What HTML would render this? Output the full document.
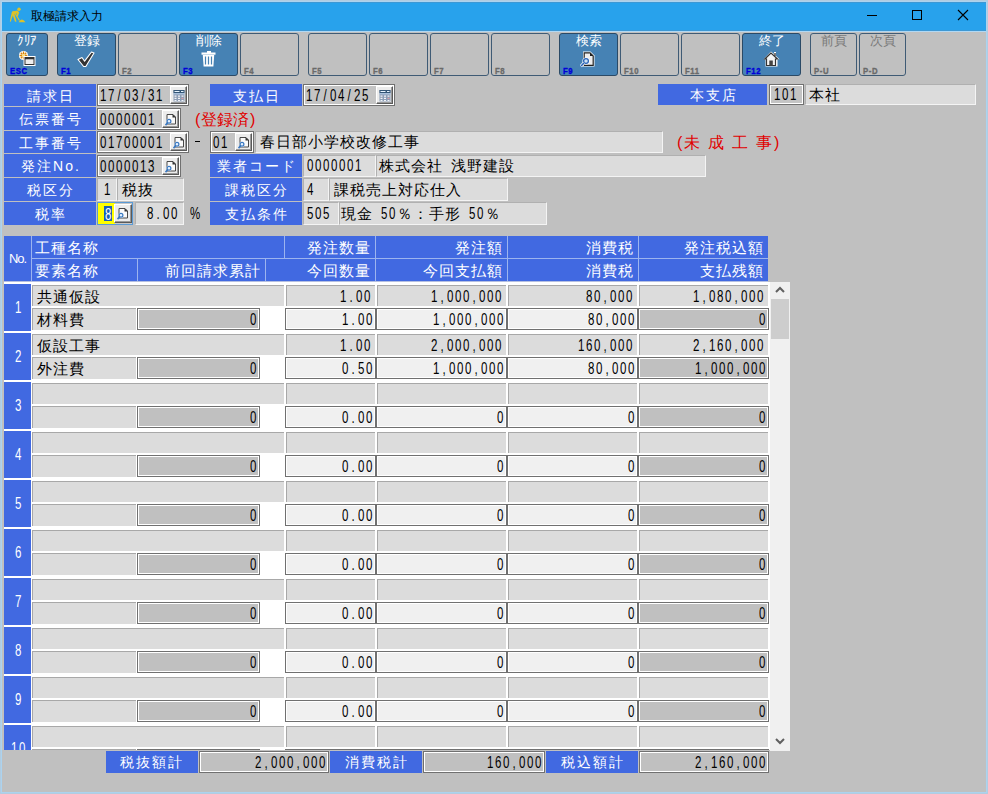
<!DOCTYPE html><html><head><meta charset="utf-8"><style>
*{margin:0;padding:0;box-sizing:border-box}
html,body{width:988px;height:794px;overflow:hidden;background:#b2cce0;font-family:"Liberation Sans",sans-serif}
div{position:absolute;white-space:nowrap}
.win{background:#c0c0c0}
.title{background:#28a2ec}
.btn{border:1px solid #2b4a66;border-radius:3px;background:#4682b4}
.btn.off{background:#c0c0c0;border-color:#3f5b75}
.bl{color:#fff;font-size:13px;text-align:center;line-height:14px;letter-spacing:-0.5px}
.key{font-family:"Liberation Sans",sans-serif;font-weight:bold;font-size:9px;color:#0000d8;line-height:8px;letter-spacing:0.7px;transform:scaleX(.86);transform-origin:0 0;-webkit-text-stroke:0.35px}
.off .key{color:#6a6a6a;-webkit-text-stroke-color:#6a6a6a}
.off .bl{color:#7a7a7a}
.n{font-family:"Liberation Sans",sans-serif;font-size:16px;letter-spacing:0}
.n i{display:inline-block;width:8px;text-align:center;font-style:normal;transform:scaleX(.72)}
.n b{display:inline-block;width:16px;font-weight:normal;font-size:15px;text-align:center}
.lab{background:#4169e1;color:#fff;font-size:14px;text-align:center;letter-spacing:2px;text-indent:2px}
.fld{background:#c4c4c4;border:1px solid #707070;box-shadow:inset 0 0 0 1px #fff;padding-left:3px;color:#000}
.ro{background:#dcdcdc;border:1px solid;border-color:#b0b0b0 #f4f4f4 #f4f4f4 #b0b0b0;font-size:15px;letter-spacing:1px;padding-left:4px;color:#000}
.ib{background:#ececec;border:1px solid;border-color:#fff #5a5a5a #5a5a5a #fff;box-shadow:inset -1px -1px 0 #9a9a9a}
.red{color:#e00000;font-size:15px}
.uc{background:#dcdcdc;border-top:1px solid #a8a8a8;border-left:1px solid #a8a8a8;font-size:15px;letter-spacing:1px;color:#000}
.in{background:#f0f0f0;border:1px solid #707070;box-shadow:inset 1px 1px 0 #fff,inset -1px -1px 0 #fff;color:#000}
.dk{background:#c0c0c0;border:1px solid #707070;box-shadow:inset 1px 1px 0 #fff,inset -1px -1px 0 #fff;color:#000}
.th{background:#4169e1;color:#fff;font-size:15px;letter-spacing:1px}
</style></head><body>
<div class="" style="left:1px;top:1px;width:986px;height:792px;background:#acd3ef"></div>
<div class="win" style="left:2px;top:31px;width:984px;height:761px;"></div>
<div class="title" style="left:2px;top:2px;width:984px;height:28px;"></div>
<div class="" style="left:2px;top:2px;width:984px;height:1px;background:#3d98d4"></div>
<div class="" style="left:2px;top:30px;width:984px;height:1px;background:#3d98d4"></div>
<div class="" style="left:2px;top:31px;width:984px;height:1px;background:#b0d8f4"></div>
<div class="" style="left:31px;top:8px;width:169px;height:17px;font-size:12px;line-height:17px;color:#000">取極請求入力</div>
<svg style="position:absolute;left:0;top:0" width="30" height="30" viewBox="0 0 30 30"><g fill="#dcc22a"><circle cx="19" cy="9.2" r="1.7"/><path d="M12 11.5 L17.5 10.5 L19.2 12.5 L17.8 16.5 L16.2 16 L17 13.5 L14.5 14 L16.5 21.5 L15 21.8 L12.8 15.5 L10.8 21.8 L9.8 21.5 L11.5 13.5 Z"/><path d="M13.5 11 L19.5 20.5" stroke="#dcc22a" stroke-width="1.2"/><path d="M18.5 22.2 Q21.8 16.8 25.5 22.2 Z"/></g></svg>
<div class="" style="left:867px;top:15px;width:10px;height:1px;background:#000"></div>
<div class="" style="left:912px;top:10px;width:10px;height:10px;border:1px solid #000"></div>
<svg style="position:absolute;left:957px;top:9px" width="12" height="12" viewBox="0 0 12 12"><path d="M1 1 L11 11 M11 1 L1 11" stroke="#000" stroke-width="1.1"/></svg>
<div class="btn" style="left:6px;top:33px;width:42px;height:43px;"><div class="bl" style="left:0;top:0px;width:100%">ｸﾘｱ</div><div style="left:12px;top:16px;line-height:0"><svg width="17" height="17" viewBox="0 0 17 17"><circle cx="4.5" cy="5.5" r="4.6" fill="#fff"/><g stroke="#d88408" stroke-width="1.3" stroke-linecap="butt"><path d="M4.5 1.6V4.2M4.5 6.8V9.4M0.6 5.5H3.2M5.8 5.5H8.4M1.8 2.8L3.4 4.4M5.6 6.6L7.2 8.2M7.2 2.8L5.6 4.4M3.4 6.6L1.8 8.2"/></g><circle cx="4.5" cy="5.5" r="1.3" fill="#fce070"/><rect x="4.5" y="6" width="12" height="10" fill="#fff"/><rect x="5.5" y="7" width="10" height="8" fill="#333"/><rect x="6.5" y="9.3" width="8" height="4.7" fill="#eee"/></svg></div><div class="key" style="left:3px;top:33px">ESC</div></div>
<div class="btn" style="left:57px;top:33px;width:59px;height:43px;"><div class="bl" style="left:0;top:0px;width:100%">登録</div><div style="left:19px;top:17px;line-height:0"><svg width="18" height="17" viewBox="0 0 18 17"><path d="M1 8.5 L5 6.5 L7.6 10.2 L14.5 1 L17 2 L8.8 15.5 L6.6 15.5 Z" fill="#333" stroke="#fff" stroke-width="1.1" stroke-linejoin="round"/></svg></div><div class="key" style="left:3px;top:33px">F1</div></div>
<div class="btn off" style="left:118px;top:33px;width:59px;height:43px;"><div class="key" style="left:3px;top:33px">F2</div></div>
<div class="btn" style="left:179px;top:33px;width:59px;height:43px;"><div class="bl" style="left:0;top:0px;width:100%">削除</div><div style="left:21px;top:17px;line-height:0"><svg width="16" height="17" viewBox="0 0 16 17"><rect x="6" y="0" width="4" height="2" fill="#fff"/><rect x="0.5" y="1.5" width="14" height="2.2" fill="#fff"/><path d="M1.8 4 H13.2 L12.4 15.5 H2.6 Z" fill="#fff"/><path d="M4.5 5.5 V13.5 M7.5 5.5 V13.5 M10.5 5.5 V13.5" stroke="#4682b4" stroke-width="1.2"/></svg></div><div class="key" style="left:3px;top:33px">F3</div></div>
<div class="btn off" style="left:240px;top:33px;width:59px;height:43px;"><div class="key" style="left:3px;top:33px">F4</div></div>
<div class="btn off" style="left:308px;top:33px;width:59px;height:43px;"><div class="key" style="left:3px;top:33px">F5</div></div>
<div class="btn off" style="left:369px;top:33px;width:59px;height:43px;"><div class="key" style="left:3px;top:33px">F6</div></div>
<div class="btn off" style="left:430px;top:33px;width:59px;height:43px;"><div class="key" style="left:3px;top:33px">F7</div></div>
<div class="btn off" style="left:491px;top:33px;width:59px;height:43px;"><div class="key" style="left:3px;top:33px">F8</div></div>
<div class="btn" style="left:559px;top:33px;width:59px;height:43px;"><div class="bl" style="left:0;top:0px;width:100%">検索</div><div style="left:20px;top:17px;line-height:0"><svg width="16" height="17" viewBox="0 0 16 17"><path d="M3 0.5 H10.5 L14.5 4.5 V15.5 H3 Z" fill="#fff"/><path d="M4.2 1.8 H10 L13.2 5 V14.3 H4.2 Z" fill="#eee" stroke="#222" stroke-width="1.2"/><path d="M10 1.8 V5 H13.2" fill="#222"/><circle cx="6" cy="10" r="3.6" fill="#fff"/><circle cx="6" cy="10" r="2.4" fill="#cfe3f5" stroke="#2a64b8" stroke-width="1.3"/><path d="M4.2 11.8 L0.8 15.2" stroke="#fff" stroke-width="3"/><path d="M4.2 11.8 L1 15" stroke="#2a64b8" stroke-width="1.6"/></svg></div><div class="key" style="left:3px;top:33px">F9</div></div>
<div class="btn off" style="left:620px;top:33px;width:59px;height:43px;"><div class="key" style="left:3px;top:33px">F10</div></div>
<div class="btn off" style="left:681px;top:33px;width:59px;height:43px;"><div class="key" style="left:3px;top:33px">F11</div></div>
<div class="btn" style="left:742px;top:33px;width:59px;height:43px;"><div class="bl" style="left:0;top:0px;width:100%">終了</div><div style="left:20px;top:17px;line-height:0"><svg width="17" height="16" viewBox="0 0 17 16"><path d="M8 0.5 L11 3 V1 H13 V5 L16.5 8.3 L14.5 8.6 V15.5 H2.5 V8.6 L0.5 8.3 Z" fill="#fff"/><path d="M8 2 L1.8 8 H3.5 V14.5 H12.5 V8 H14.5 Z" fill="#f4f4f4" stroke="#333" stroke-width="1.2" stroke-linejoin="miter"/><path d="M12 2 V5" stroke="#333" stroke-width="1.3"/><rect x="6.3" y="9.5" width="3.5" height="5" fill="#444"/></svg></div><div class="key" style="left:3px;top:33px">F12</div></div>
<div class="btn off" style="left:810px;top:33px;width:47px;height:43px;"><div class="bl" style="left:0;top:0px;width:100%">前頁</div><div class="key" style="left:3px;top:33px">P-U</div></div>
<div class="btn off" style="left:859px;top:33px;width:47px;height:43px;"><div class="bl" style="left:0;top:0px;width:100%">次頁</div><div class="key" style="left:3px;top:33px">P-D</div></div>
<div class="lab" style="left:4px;top:84px;width:92px;height:22px;line-height:24px;">請求日</div>
<div class="lab" style="left:4px;top:107px;width:92px;height:23px;line-height:25px;">伝票番号</div>
<div class="lab" style="left:4px;top:131px;width:92px;height:22px;line-height:24px;">工事番号</div>
<div class="lab" style="left:4px;top:154px;width:92px;height:23px;line-height:25px;">発注No.</div>
<div class="lab" style="left:4px;top:178px;width:92px;height:23px;line-height:25px;">税区分</div>
<div class="lab" style="left:4px;top:202px;width:92px;height:23px;line-height:25px;">税率</div>
<div class="fld" style="left:97px;top:84px;width:92px;height:22px;"><div style="left:1px;top:1px;line-height:20px"><span class="n"><i>1</i><i>7</i><i>/</i><i>0</i><i>3</i><i>/</i><i>3</i><i>1</i></span></div><div class="ib" style="right:1px;top:1px;width:17px;height:18px"><svg style="position:absolute;left:2px;top:2px" width="12" height="13" viewBox="0 0 12 13"><rect x="0.5" y="1" width="11" height="11.5" fill="#8c9db5"/><rect x="0.5" y="1" width="11" height="3" fill="#345676"/><rect x="1.5" y="2" width="5" height="1" fill="#e8f4ff"/><rect x="8" y="2" width="2.5" height="1" fill="#e8f4ff"/><rect x="0.5" y="4" width="11" height="1.5" fill="#a8c0dc"/><path d="M1.5 6.5h2v1.3h-2zM5 6.5h2v1.3H5zM8.5 6.5h2v1.3h-2zM1.5 8.8h2v1.3h-2zM5 8.8h2v1.3H5zM1.5 11h2v1h-2zM5 11h2v1H5zM8.5 11h2v1h-2z" fill="#f2f4f8"/><path d="M8.5 8.8h2v1.3h-2z" fill="#d8a0a8"/></svg></div></div>
<div class="lab" style="left:210px;top:84px;width:92px;height:22px;line-height:24px;">支払日</div>
<div class="fld" style="left:303px;top:84px;width:92px;height:22px;"><div style="left:1px;top:1px;line-height:20px"><span class="n"><i>1</i><i>7</i><i>/</i><i>0</i><i>4</i><i>/</i><i>2</i><i>5</i></span></div><div class="ib" style="right:1px;top:1px;width:17px;height:18px"><svg style="position:absolute;left:2px;top:2px" width="12" height="13" viewBox="0 0 12 13"><rect x="0.5" y="1" width="11" height="11.5" fill="#8c9db5"/><rect x="0.5" y="1" width="11" height="3" fill="#345676"/><rect x="1.5" y="2" width="5" height="1" fill="#e8f4ff"/><rect x="8" y="2" width="2.5" height="1" fill="#e8f4ff"/><rect x="0.5" y="4" width="11" height="1.5" fill="#a8c0dc"/><path d="M1.5 6.5h2v1.3h-2zM5 6.5h2v1.3H5zM8.5 6.5h2v1.3h-2zM1.5 8.8h2v1.3h-2zM5 8.8h2v1.3H5zM1.5 11h2v1h-2zM5 11h2v1H5zM8.5 11h2v1h-2z" fill="#f2f4f8"/><path d="M8.5 8.8h2v1.3h-2z" fill="#d8a0a8"/></svg></div></div>
<div class="lab" style="left:658px;top:84px;width:109px;height:21px;line-height:22px;font-size:14px;letter-spacing:2px">本支店</div>
<div class="fld" style="left:769px;top:84px;width:35px;height:21px;padding-left:3px;line-height:19px"><span class="n"><i>1</i><i>0</i><i>1</i></span></div>
<div class="ro" style="left:805px;top:84px;width:171px;height:21px;line-height:20px;padding-left:3px">本社</div>
<div class="fld" style="left:97px;top:108px;width:84px;height:22px;"><div style="left:1px;top:1px;line-height:20px"><span class="n"><i>0</i><i>0</i><i>0</i><i>0</i><i>0</i><i>0</i><i>1</i></span></div><div class="ib" style="right:1px;top:1px;width:17px;height:18px"><svg style="position:absolute;left:2px;top:2px" width="13" height="14" viewBox="0 0 13 14"><path d="M2 1.5 H8 L10.5 4 V11 H2 Z" fill="#fafafa" stroke="#484848" stroke-width="1"/><path d="M7.5 1 L11 4.5 H7.5 Z" fill="#333"/><circle cx="4" cy="8.2" r="2.6" fill="#fff"/><circle cx="4" cy="8.2" r="1.9" fill="#e6f2ff" stroke="#3a78c0" stroke-width="1.2"/><path d="M2.6 9.8 L0.5 12.2" stroke="#3a78c0" stroke-width="1.7"/></svg></div></div>
<div class="red" style="left:195px;top:108px;width:17px;height:22px;line-height:23px;font-size:16px">(</div>
<div class="red" style="left:201px;top:108px;width:17px;height:22px;line-height:23px;font-size:16px">登</div>
<div class="red" style="left:217px;top:108px;width:17px;height:22px;line-height:23px;font-size:16px">録</div>
<div class="red" style="left:233px;top:108px;width:17px;height:22px;line-height:23px;font-size:16px">済</div>
<div class="red" style="left:250px;top:108px;width:17px;height:22px;line-height:23px;font-size:16px">)</div>
<div class="fld" style="left:97px;top:131px;width:92px;height:22px;"><div style="left:1px;top:1px;line-height:20px"><span class="n"><i>0</i><i>1</i><i>7</i><i>0</i><i>0</i><i>0</i><i>0</i><i>1</i></span></div><div class="ib" style="right:1px;top:1px;width:17px;height:18px"><svg style="position:absolute;left:2px;top:2px" width="13" height="14" viewBox="0 0 13 14"><path d="M2 1.5 H8 L10.5 4 V11 H2 Z" fill="#fafafa" stroke="#484848" stroke-width="1"/><path d="M7.5 1 L11 4.5 H7.5 Z" fill="#333"/><circle cx="4" cy="8.2" r="2.6" fill="#fff"/><circle cx="4" cy="8.2" r="1.9" fill="#e6f2ff" stroke="#3a78c0" stroke-width="1.2"/><path d="M2.6 9.8 L0.5 12.2" stroke="#3a78c0" stroke-width="1.7"/></svg></div></div>
<div class="" style="left:195px;top:141px;width:5px;height:1px;background:#000"></div>
<div class="fld" style="left:210px;top:131px;width:44px;height:22px;"><div style="left:1px;top:1px;line-height:20px"><span class="n"><i>0</i><i>1</i></span></div><div class="ib" style="right:1px;top:1px;width:17px;height:18px"><svg style="position:absolute;left:2px;top:2px" width="13" height="14" viewBox="0 0 13 14"><path d="M2 1.5 H8 L10.5 4 V11 H2 Z" fill="#fafafa" stroke="#484848" stroke-width="1"/><path d="M7.5 1 L11 4.5 H7.5 Z" fill="#333"/><circle cx="4" cy="8.2" r="2.6" fill="#fff"/><circle cx="4" cy="8.2" r="1.9" fill="#e6f2ff" stroke="#3a78c0" stroke-width="1.2"/><path d="M2.6 9.8 L0.5 12.2" stroke="#3a78c0" stroke-width="1.7"/></svg></div></div>
<div class="ro" style="left:255px;top:131px;width:408px;height:22px;line-height:20px;">春日部小学校改修工事</div>
<div class="red" style="left:677px;top:131px;width:17px;height:22px;line-height:23px;font-size:16px">(</div>
<div class="red" style="left:684px;top:131px;width:17px;height:22px;line-height:23px;font-size:16px">未</div>
<div class="red" style="left:708px;top:131px;width:17px;height:22px;line-height:23px;font-size:16px">成</div>
<div class="red" style="left:732px;top:131px;width:17px;height:22px;line-height:23px;font-size:16px">工</div>
<div class="red" style="left:756px;top:131px;width:17px;height:22px;line-height:23px;font-size:16px">事</div>
<div class="red" style="left:774px;top:131px;width:17px;height:22px;line-height:23px;font-size:16px">)</div>
<div class="fld" style="left:97px;top:155px;width:84px;height:22px;"><div style="left:1px;top:1px;line-height:20px"><span class="n"><i>0</i><i>0</i><i>0</i><i>0</i><i>0</i><i>1</i><i>3</i></span></div><div class="ib" style="right:1px;top:1px;width:17px;height:18px"><svg style="position:absolute;left:2px;top:2px" width="13" height="14" viewBox="0 0 13 14"><path d="M2 1.5 H8 L10.5 4 V11 H2 Z" fill="#fafafa" stroke="#484848" stroke-width="1"/><path d="M7.5 1 L11 4.5 H7.5 Z" fill="#333"/><circle cx="4" cy="8.2" r="2.6" fill="#fff"/><circle cx="4" cy="8.2" r="1.9" fill="#e6f2ff" stroke="#3a78c0" stroke-width="1.2"/><path d="M2.6 9.8 L0.5 12.2" stroke="#3a78c0" stroke-width="1.7"/></svg></div></div>
<div class="lab" style="left:210px;top:154px;width:92px;height:23px;line-height:25px;">業者コード</div>
<div class="ro" style="left:303px;top:155px;width:73px;height:22px;line-height:20px;padding-left:2px"><span class="n"><i>0</i><i>0</i><i>0</i><i>0</i><i>0</i><i>0</i><i>1</i></span></div>
<div class="ro" style="left:376px;top:155px;width:330px;height:22px;line-height:20px;padding-left:1px"><span class="n"><b>株</b><b>式</b><b>会</b><b>社</b><i>&nbsp;</i><b>浅</b><b>野</b><b>建</b><b>設</b></span></div>
<div class="ro" style="left:97px;top:178px;width:20px;height:23px;line-height:21px;padding-left:5px"><span class="n"><i>1</i></span></div>
<div class="ro" style="left:117px;top:178px;width:67px;height:23px;line-height:21px;">税抜</div>
<div class="lab" style="left:210px;top:178px;width:92px;height:23px;line-height:25px;">課税区分</div>
<div class="ro" style="left:303px;top:178px;width:26px;height:23px;line-height:21px;padding-left:2px"><span class="n"><i>4</i></span></div>
<div class="ro" style="left:329px;top:178px;width:179px;height:23px;line-height:21px;">課税売上対応仕入</div>
<div class="" style="left:97px;top:202px;width:36px;height:23px;background:#c8c8c8;border:1px solid #5a9ad6"><div style="left:0;top:0;width:17px;height:21px;background:#ffff00"></div><div style="left:6px;top:3px;width:8px;height:15px;background:#1a5fb4;color:#fff;line-height:17px"><span class="n"><i>8</i></span></div><div class="ib" style="left:16px;top:1px;width:18px;height:19px"><svg style="position:absolute;left:2px;top:2px" width="13" height="14" viewBox="0 0 13 14"><path d="M2 1.5 H8 L10.5 4 V11 H2 Z" fill="#fafafa" stroke="#484848" stroke-width="1"/><path d="M7.5 1 L11 4.5 H7.5 Z" fill="#333"/><circle cx="4" cy="8.2" r="2.6" fill="#fff"/><circle cx="4" cy="8.2" r="1.9" fill="#e6f2ff" stroke="#3a78c0" stroke-width="1.2"/><path d="M2.6 9.8 L0.5 12.2" stroke="#3a78c0" stroke-width="1.7"/></svg></div></div>
<div class="ro" style="left:135px;top:202px;width:49px;height:23px;line-height:21px;text-align:right;padding-right:3px;padding-right:5px"><span class="n"><i>8</i><i>.</i><i>0</i><i>0</i></span></div>
<div class="" style="left:189px;top:202px;width:11px;height:23px;line-height:23px;color:#000"><span class="n"><i>%</i></span></div>
<div class="lab" style="left:210px;top:202px;width:92px;height:23px;line-height:25px;">支払条件</div>
<div class="ro" style="left:303px;top:202px;width:36px;height:23px;line-height:21px;padding-left:2px"><span class="n"><i>5</i><i>0</i><i>5</i></span></div>
<div class="ro" style="left:339px;top:202px;width:208px;height:23px;line-height:21px;padding-left:0px"><span class="n"><b>現</b><b>金</b><i>&nbsp;</i><i>5</i><i>0</i><b>％</b><b>：</b><b>手</b><b>形</b><i>&nbsp;</i><i>5</i><i>0</i><b>％</b></span></div>
<div class="th" style="left:4px;top:236px;width:764px;height:45px;"></div>
<div class="th" style="left:4px;top:236px;width:27px;height:45px;text-align:center;line-height:45px;font-size:13px;letter-spacing:-1px">No.</div>
<div class="" style="left:4px;top:281px;width:764px;height:1px;background:#b4bfe2"></div>
<div class="" style="left:31px;top:236px;width:1px;height:45px;background:#9cb4ef"></div>
<div class="th" style="left:32px;top:236px;width:252px;height:22px;padding-left:3px;line-height:24px">工種名称</div>
<div class="th" style="left:285px;top:236px;width:90px;height:22px;padding-right:4px;text-align:right;line-height:24px">発注数量</div>
<div class="th" style="left:376px;top:236px;width:131px;height:22px;padding-right:4px;text-align:right;line-height:24px">発注額</div>
<div class="th" style="left:508px;top:236px;width:130px;height:22px;padding-right:4px;text-align:right;line-height:24px">消費税</div>
<div class="th" style="left:639px;top:236px;width:129px;height:22px;padding-right:4px;text-align:right;line-height:24px">発注税込額</div>
<div class="" style="left:32px;top:258px;width:736px;height:1px;background:#9cb4ef"></div>
<div class="th" style="left:32px;top:259px;width:105px;height:22px;padding-left:3px;line-height:24px">要素名称</div>
<div class="th" style="left:138px;top:259px;width:127px;height:22px;padding-right:4px;text-align:right;line-height:24px">前回請求累計</div>
<div class="th" style="left:266px;top:259px;width:109px;height:22px;padding-right:4px;text-align:right;line-height:24px">今回数量</div>
<div class="th" style="left:376px;top:259px;width:131px;height:22px;padding-right:4px;text-align:right;line-height:24px">今回支払額</div>
<div class="th" style="left:508px;top:259px;width:130px;height:22px;padding-right:4px;text-align:right;line-height:24px">消費税</div>
<div class="th" style="left:639px;top:259px;width:129px;height:22px;padding-right:4px;text-align:right;line-height:24px">支払残額</div>
<div class="" style="left:284px;top:236px;width:1px;height:22px;background:#9cb4ef"></div>
<div class="" style="left:375px;top:236px;width:1px;height:22px;background:#9cb4ef"></div>
<div class="" style="left:507px;top:236px;width:1px;height:22px;background:#9cb4ef"></div>
<div class="" style="left:638px;top:236px;width:1px;height:22px;background:#9cb4ef"></div>
<div class="" style="left:137px;top:259px;width:1px;height:22px;background:#9cb4ef"></div>
<div class="" style="left:265px;top:259px;width:1px;height:22px;background:#9cb4ef"></div>
<div class="" style="left:375px;top:259px;width:1px;height:22px;background:#9cb4ef"></div>
<div class="" style="left:507px;top:259px;width:1px;height:22px;background:#9cb4ef"></div>
<div class="" style="left:638px;top:259px;width:1px;height:22px;background:#9cb4ef"></div>
<div style="left:4px;top:282px;width:766px;height:468px;background:#fff;overflow:hidden">
<div class="th" style="left:0px;top:2px;width:27px;height:47px;text-align:center;line-height:48px;letter-spacing:0"><span class="n"><i>1</i></span></div>
<div class="uc" style="left:28px;top:3px;width:252px;height:21px;padding-left:4px;line-height:21px;">共通仮設</div>
<div class="uc" style="left:282px;top:3px;width:89px;height:21px;text-align:right;padding-right:4px;line-height:21px;"><span class="n"><i>1</i><i>.</i><i>0</i><i>0</i></span></div>
<div class="uc" style="left:373px;top:3px;width:129px;height:21px;text-align:right;padding-right:4px;line-height:21px;"><span class="n"><i>1</i><i>,</i><i>0</i><i>0</i><i>0</i><i>,</i><i>0</i><i>0</i><i>0</i></span></div>
<div class="uc" style="left:504px;top:3px;width:129px;height:21px;text-align:right;padding-right:4px;line-height:21px;"><span class="n"><i>8</i><i>0</i><i>,</i><i>0</i><i>0</i><i>0</i></span></div>
<div class="uc" style="left:635px;top:3px;width:129px;height:21px;text-align:right;padding-right:4px;line-height:21px;"><span class="n"><i>1</i><i>,</i><i>0</i><i>8</i><i>0</i><i>,</i><i>0</i><i>0</i><i>0</i></span></div>
<div class="uc" style="left:28px;top:26px;width:104px;height:22px;padding-left:4px;line-height:22px;">材料費</div>
<div class="dk" style="left:133px;top:26px;width:123px;height:22px;text-align:right;padding-right:2px;line-height:22px;"><span class="n"><i>0</i></span></div>
<div class="in" style="left:281px;top:26px;width:91px;height:22px;text-align:right;padding-right:2px;line-height:22px;"><span class="n"><i>1</i><i>.</i><i>0</i><i>0</i></span></div>
<div class="in" style="left:372px;top:26px;width:131px;height:22px;text-align:right;padding-right:2px;line-height:22px;"><span class="n"><i>1</i><i>,</i><i>0</i><i>0</i><i>0</i><i>,</i><i>0</i><i>0</i><i>0</i></span></div>
<div class="in" style="left:503px;top:26px;width:131px;height:22px;text-align:right;padding-right:2px;line-height:22px;"><span class="n"><i>8</i><i>0</i><i>,</i><i>0</i><i>0</i><i>0</i></span></div>
<div class="dk" style="left:634px;top:26px;width:131px;height:22px;text-align:right;padding-right:2px;line-height:22px;"><span class="n"><i>0</i></span></div>
<div class="th" style="left:0px;top:51px;width:27px;height:47px;text-align:center;line-height:48px;letter-spacing:0"><span class="n"><i>2</i></span></div>
<div class="uc" style="left:28px;top:52px;width:252px;height:21px;padding-left:4px;line-height:21px;">仮設工事</div>
<div class="uc" style="left:282px;top:52px;width:89px;height:21px;text-align:right;padding-right:4px;line-height:21px;"><span class="n"><i>1</i><i>.</i><i>0</i><i>0</i></span></div>
<div class="uc" style="left:373px;top:52px;width:129px;height:21px;text-align:right;padding-right:4px;line-height:21px;"><span class="n"><i>2</i><i>,</i><i>0</i><i>0</i><i>0</i><i>,</i><i>0</i><i>0</i><i>0</i></span></div>
<div class="uc" style="left:504px;top:52px;width:129px;height:21px;text-align:right;padding-right:4px;line-height:21px;"><span class="n"><i>1</i><i>6</i><i>0</i><i>,</i><i>0</i><i>0</i><i>0</i></span></div>
<div class="uc" style="left:635px;top:52px;width:129px;height:21px;text-align:right;padding-right:4px;line-height:21px;"><span class="n"><i>2</i><i>,</i><i>1</i><i>6</i><i>0</i><i>,</i><i>0</i><i>0</i><i>0</i></span></div>
<div class="uc" style="left:28px;top:75px;width:104px;height:22px;padding-left:4px;line-height:22px;">外注費</div>
<div class="dk" style="left:133px;top:75px;width:123px;height:22px;text-align:right;padding-right:2px;line-height:22px;"><span class="n"><i>0</i></span></div>
<div class="in" style="left:281px;top:75px;width:91px;height:22px;text-align:right;padding-right:2px;line-height:22px;"><span class="n"><i>0</i><i>.</i><i>5</i><i>0</i></span></div>
<div class="in" style="left:372px;top:75px;width:131px;height:22px;text-align:right;padding-right:2px;line-height:22px;"><span class="n"><i>1</i><i>,</i><i>0</i><i>0</i><i>0</i><i>,</i><i>0</i><i>0</i><i>0</i></span></div>
<div class="in" style="left:503px;top:75px;width:131px;height:22px;text-align:right;padding-right:2px;line-height:22px;"><span class="n"><i>8</i><i>0</i><i>,</i><i>0</i><i>0</i><i>0</i></span></div>
<div class="dk" style="left:634px;top:75px;width:131px;height:22px;text-align:right;padding-right:2px;line-height:22px;"><span class="n"><i>1</i><i>,</i><i>0</i><i>0</i><i>0</i><i>,</i><i>0</i><i>0</i><i>0</i></span></div>
<div class="th" style="left:0px;top:100px;width:27px;height:47px;text-align:center;line-height:48px;letter-spacing:0"><span class="n"><i>3</i></span></div>
<div class="uc" style="left:28px;top:101px;width:252px;height:21px;padding-left:4px;line-height:21px;"></div>
<div class="uc" style="left:282px;top:101px;width:89px;height:21px;text-align:right;padding-right:4px;line-height:21px;"></div>
<div class="uc" style="left:373px;top:101px;width:129px;height:21px;text-align:right;padding-right:4px;line-height:21px;"></div>
<div class="uc" style="left:504px;top:101px;width:129px;height:21px;text-align:right;padding-right:4px;line-height:21px;"></div>
<div class="uc" style="left:635px;top:101px;width:129px;height:21px;text-align:right;padding-right:4px;line-height:21px;"></div>
<div class="uc" style="left:28px;top:124px;width:104px;height:22px;padding-left:4px;line-height:22px;"></div>
<div class="dk" style="left:133px;top:124px;width:123px;height:22px;text-align:right;padding-right:2px;line-height:22px;"><span class="n"><i>0</i></span></div>
<div class="in" style="left:281px;top:124px;width:91px;height:22px;text-align:right;padding-right:2px;line-height:22px;"><span class="n"><i>0</i><i>.</i><i>0</i><i>0</i></span></div>
<div class="in" style="left:372px;top:124px;width:131px;height:22px;text-align:right;padding-right:2px;line-height:22px;"><span class="n"><i>0</i></span></div>
<div class="in" style="left:503px;top:124px;width:131px;height:22px;text-align:right;padding-right:2px;line-height:22px;"><span class="n"><i>0</i></span></div>
<div class="dk" style="left:634px;top:124px;width:131px;height:22px;text-align:right;padding-right:2px;line-height:22px;"><span class="n"><i>0</i></span></div>
<div class="th" style="left:0px;top:149px;width:27px;height:47px;text-align:center;line-height:48px;letter-spacing:0"><span class="n"><i>4</i></span></div>
<div class="uc" style="left:28px;top:150px;width:252px;height:21px;padding-left:4px;line-height:21px;"></div>
<div class="uc" style="left:282px;top:150px;width:89px;height:21px;text-align:right;padding-right:4px;line-height:21px;"></div>
<div class="uc" style="left:373px;top:150px;width:129px;height:21px;text-align:right;padding-right:4px;line-height:21px;"></div>
<div class="uc" style="left:504px;top:150px;width:129px;height:21px;text-align:right;padding-right:4px;line-height:21px;"></div>
<div class="uc" style="left:635px;top:150px;width:129px;height:21px;text-align:right;padding-right:4px;line-height:21px;"></div>
<div class="uc" style="left:28px;top:173px;width:104px;height:22px;padding-left:4px;line-height:22px;"></div>
<div class="dk" style="left:133px;top:173px;width:123px;height:22px;text-align:right;padding-right:2px;line-height:22px;"><span class="n"><i>0</i></span></div>
<div class="in" style="left:281px;top:173px;width:91px;height:22px;text-align:right;padding-right:2px;line-height:22px;"><span class="n"><i>0</i><i>.</i><i>0</i><i>0</i></span></div>
<div class="in" style="left:372px;top:173px;width:131px;height:22px;text-align:right;padding-right:2px;line-height:22px;"><span class="n"><i>0</i></span></div>
<div class="in" style="left:503px;top:173px;width:131px;height:22px;text-align:right;padding-right:2px;line-height:22px;"><span class="n"><i>0</i></span></div>
<div class="dk" style="left:634px;top:173px;width:131px;height:22px;text-align:right;padding-right:2px;line-height:22px;"><span class="n"><i>0</i></span></div>
<div class="th" style="left:0px;top:198px;width:27px;height:47px;text-align:center;line-height:48px;letter-spacing:0"><span class="n"><i>5</i></span></div>
<div class="uc" style="left:28px;top:199px;width:252px;height:21px;padding-left:4px;line-height:21px;"></div>
<div class="uc" style="left:282px;top:199px;width:89px;height:21px;text-align:right;padding-right:4px;line-height:21px;"></div>
<div class="uc" style="left:373px;top:199px;width:129px;height:21px;text-align:right;padding-right:4px;line-height:21px;"></div>
<div class="uc" style="left:504px;top:199px;width:129px;height:21px;text-align:right;padding-right:4px;line-height:21px;"></div>
<div class="uc" style="left:635px;top:199px;width:129px;height:21px;text-align:right;padding-right:4px;line-height:21px;"></div>
<div class="uc" style="left:28px;top:222px;width:104px;height:22px;padding-left:4px;line-height:22px;"></div>
<div class="dk" style="left:133px;top:222px;width:123px;height:22px;text-align:right;padding-right:2px;line-height:22px;"><span class="n"><i>0</i></span></div>
<div class="in" style="left:281px;top:222px;width:91px;height:22px;text-align:right;padding-right:2px;line-height:22px;"><span class="n"><i>0</i><i>.</i><i>0</i><i>0</i></span></div>
<div class="in" style="left:372px;top:222px;width:131px;height:22px;text-align:right;padding-right:2px;line-height:22px;"><span class="n"><i>0</i></span></div>
<div class="in" style="left:503px;top:222px;width:131px;height:22px;text-align:right;padding-right:2px;line-height:22px;"><span class="n"><i>0</i></span></div>
<div class="dk" style="left:634px;top:222px;width:131px;height:22px;text-align:right;padding-right:2px;line-height:22px;"><span class="n"><i>0</i></span></div>
<div class="th" style="left:0px;top:247px;width:27px;height:47px;text-align:center;line-height:48px;letter-spacing:0"><span class="n"><i>6</i></span></div>
<div class="uc" style="left:28px;top:248px;width:252px;height:21px;padding-left:4px;line-height:21px;"></div>
<div class="uc" style="left:282px;top:248px;width:89px;height:21px;text-align:right;padding-right:4px;line-height:21px;"></div>
<div class="uc" style="left:373px;top:248px;width:129px;height:21px;text-align:right;padding-right:4px;line-height:21px;"></div>
<div class="uc" style="left:504px;top:248px;width:129px;height:21px;text-align:right;padding-right:4px;line-height:21px;"></div>
<div class="uc" style="left:635px;top:248px;width:129px;height:21px;text-align:right;padding-right:4px;line-height:21px;"></div>
<div class="uc" style="left:28px;top:271px;width:104px;height:22px;padding-left:4px;line-height:22px;"></div>
<div class="dk" style="left:133px;top:271px;width:123px;height:22px;text-align:right;padding-right:2px;line-height:22px;"><span class="n"><i>0</i></span></div>
<div class="in" style="left:281px;top:271px;width:91px;height:22px;text-align:right;padding-right:2px;line-height:22px;"><span class="n"><i>0</i><i>.</i><i>0</i><i>0</i></span></div>
<div class="in" style="left:372px;top:271px;width:131px;height:22px;text-align:right;padding-right:2px;line-height:22px;"><span class="n"><i>0</i></span></div>
<div class="in" style="left:503px;top:271px;width:131px;height:22px;text-align:right;padding-right:2px;line-height:22px;"><span class="n"><i>0</i></span></div>
<div class="dk" style="left:634px;top:271px;width:131px;height:22px;text-align:right;padding-right:2px;line-height:22px;"><span class="n"><i>0</i></span></div>
<div class="th" style="left:0px;top:296px;width:27px;height:47px;text-align:center;line-height:48px;letter-spacing:0"><span class="n"><i>7</i></span></div>
<div class="uc" style="left:28px;top:297px;width:252px;height:21px;padding-left:4px;line-height:21px;"></div>
<div class="uc" style="left:282px;top:297px;width:89px;height:21px;text-align:right;padding-right:4px;line-height:21px;"></div>
<div class="uc" style="left:373px;top:297px;width:129px;height:21px;text-align:right;padding-right:4px;line-height:21px;"></div>
<div class="uc" style="left:504px;top:297px;width:129px;height:21px;text-align:right;padding-right:4px;line-height:21px;"></div>
<div class="uc" style="left:635px;top:297px;width:129px;height:21px;text-align:right;padding-right:4px;line-height:21px;"></div>
<div class="uc" style="left:28px;top:320px;width:104px;height:22px;padding-left:4px;line-height:22px;"></div>
<div class="dk" style="left:133px;top:320px;width:123px;height:22px;text-align:right;padding-right:2px;line-height:22px;"><span class="n"><i>0</i></span></div>
<div class="in" style="left:281px;top:320px;width:91px;height:22px;text-align:right;padding-right:2px;line-height:22px;"><span class="n"><i>0</i><i>.</i><i>0</i><i>0</i></span></div>
<div class="in" style="left:372px;top:320px;width:131px;height:22px;text-align:right;padding-right:2px;line-height:22px;"><span class="n"><i>0</i></span></div>
<div class="in" style="left:503px;top:320px;width:131px;height:22px;text-align:right;padding-right:2px;line-height:22px;"><span class="n"><i>0</i></span></div>
<div class="dk" style="left:634px;top:320px;width:131px;height:22px;text-align:right;padding-right:2px;line-height:22px;"><span class="n"><i>0</i></span></div>
<div class="th" style="left:0px;top:345px;width:27px;height:47px;text-align:center;line-height:48px;letter-spacing:0"><span class="n"><i>8</i></span></div>
<div class="uc" style="left:28px;top:346px;width:252px;height:21px;padding-left:4px;line-height:21px;"></div>
<div class="uc" style="left:282px;top:346px;width:89px;height:21px;text-align:right;padding-right:4px;line-height:21px;"></div>
<div class="uc" style="left:373px;top:346px;width:129px;height:21px;text-align:right;padding-right:4px;line-height:21px;"></div>
<div class="uc" style="left:504px;top:346px;width:129px;height:21px;text-align:right;padding-right:4px;line-height:21px;"></div>
<div class="uc" style="left:635px;top:346px;width:129px;height:21px;text-align:right;padding-right:4px;line-height:21px;"></div>
<div class="uc" style="left:28px;top:369px;width:104px;height:22px;padding-left:4px;line-height:22px;"></div>
<div class="dk" style="left:133px;top:369px;width:123px;height:22px;text-align:right;padding-right:2px;line-height:22px;"><span class="n"><i>0</i></span></div>
<div class="in" style="left:281px;top:369px;width:91px;height:22px;text-align:right;padding-right:2px;line-height:22px;"><span class="n"><i>0</i><i>.</i><i>0</i><i>0</i></span></div>
<div class="in" style="left:372px;top:369px;width:131px;height:22px;text-align:right;padding-right:2px;line-height:22px;"><span class="n"><i>0</i></span></div>
<div class="in" style="left:503px;top:369px;width:131px;height:22px;text-align:right;padding-right:2px;line-height:22px;"><span class="n"><i>0</i></span></div>
<div class="dk" style="left:634px;top:369px;width:131px;height:22px;text-align:right;padding-right:2px;line-height:22px;"><span class="n"><i>0</i></span></div>
<div class="th" style="left:0px;top:394px;width:27px;height:47px;text-align:center;line-height:48px;letter-spacing:0"><span class="n"><i>9</i></span></div>
<div class="uc" style="left:28px;top:395px;width:252px;height:21px;padding-left:4px;line-height:21px;"></div>
<div class="uc" style="left:282px;top:395px;width:89px;height:21px;text-align:right;padding-right:4px;line-height:21px;"></div>
<div class="uc" style="left:373px;top:395px;width:129px;height:21px;text-align:right;padding-right:4px;line-height:21px;"></div>
<div class="uc" style="left:504px;top:395px;width:129px;height:21px;text-align:right;padding-right:4px;line-height:21px;"></div>
<div class="uc" style="left:635px;top:395px;width:129px;height:21px;text-align:right;padding-right:4px;line-height:21px;"></div>
<div class="uc" style="left:28px;top:418px;width:104px;height:22px;padding-left:4px;line-height:22px;"></div>
<div class="dk" style="left:133px;top:418px;width:123px;height:22px;text-align:right;padding-right:2px;line-height:22px;"><span class="n"><i>0</i></span></div>
<div class="in" style="left:281px;top:418px;width:91px;height:22px;text-align:right;padding-right:2px;line-height:22px;"><span class="n"><i>0</i><i>.</i><i>0</i><i>0</i></span></div>
<div class="in" style="left:372px;top:418px;width:131px;height:22px;text-align:right;padding-right:2px;line-height:22px;"><span class="n"><i>0</i></span></div>
<div class="in" style="left:503px;top:418px;width:131px;height:22px;text-align:right;padding-right:2px;line-height:22px;"><span class="n"><i>0</i></span></div>
<div class="dk" style="left:634px;top:418px;width:131px;height:22px;text-align:right;padding-right:2px;line-height:22px;"><span class="n"><i>0</i></span></div>
<div class="th" style="left:0px;top:443px;width:27px;height:47px;text-align:center;line-height:48px;letter-spacing:0"><span class="n"><i>1</i><i>0</i></span></div>
<div class="uc" style="left:28px;top:444px;width:252px;height:21px;padding-left:4px;line-height:21px;"></div>
<div class="uc" style="left:282px;top:444px;width:89px;height:21px;text-align:right;padding-right:4px;line-height:21px;"></div>
<div class="uc" style="left:373px;top:444px;width:129px;height:21px;text-align:right;padding-right:4px;line-height:21px;"></div>
<div class="uc" style="left:504px;top:444px;width:129px;height:21px;text-align:right;padding-right:4px;line-height:21px;"></div>
<div class="uc" style="left:635px;top:444px;width:129px;height:21px;text-align:right;padding-right:4px;line-height:21px;"></div>
<div class="uc" style="left:28px;top:467px;width:104px;height:22px;padding-left:4px;line-height:22px;"></div>
<div class="dk" style="left:133px;top:467px;width:123px;height:22px;text-align:right;padding-right:2px;line-height:22px;"><span class="n"><i>0</i></span></div>
<div class="in" style="left:281px;top:467px;width:91px;height:22px;text-align:right;padding-right:2px;line-height:22px;"><span class="n"><i>0</i><i>.</i><i>0</i><i>0</i></span></div>
<div class="in" style="left:372px;top:467px;width:131px;height:22px;text-align:right;padding-right:2px;line-height:22px;"><span class="n"><i>0</i></span></div>
<div class="in" style="left:503px;top:467px;width:131px;height:22px;text-align:right;padding-right:2px;line-height:22px;"><span class="n"><i>0</i></span></div>
<div class="dk" style="left:634px;top:467px;width:131px;height:22px;text-align:right;padding-right:2px;line-height:22px;"><span class="n"><i>0</i></span></div>
</div>
<div class="" style="left:770px;top:282px;width:20px;height:469px;background:#f0f0f0"></div>
<div class="" style="left:771px;top:299px;width:18px;height:40px;background:#cdcdcd"></div>
<svg style="position:absolute;left:775px;top:286px" width="10" height="8" viewBox="0 0 10 8"><path d="M1 6 L5 2 L9 6" fill="none" stroke="#606060" stroke-width="2"/></svg>
<svg style="position:absolute;left:775px;top:737px" width="10" height="8" viewBox="0 0 10 8"><path d="M1 2 L5 6 L9 2" fill="none" stroke="#606060" stroke-width="2"/></svg>
<div class="lab" style="left:106px;top:751px;width:92px;height:22px;line-height:22px;text-indent:0">税抜額計</div>
<div class="dk" style="left:199px;top:751px;width:130px;height:22px;text-align:right;padding-right:2px;line-height:22px"><span class="n"><i>2</i><i>,</i><i>0</i><i>0</i><i>0</i><i>,</i><i>0</i><i>0</i><i>0</i></span></div>
<div class="lab" style="left:330px;top:751px;width:92px;height:22px;line-height:22px">消費税計</div>
<div class="dk" style="left:423px;top:751px;width:122px;height:22px;text-align:right;padding-right:2px;line-height:22px"><span class="n"><i>1</i><i>6</i><i>0</i><i>,</i><i>0</i><i>0</i><i>0</i></span></div>
<div class="lab" style="left:546px;top:751px;width:92px;height:22px;line-height:22px">税込額計</div>
<div class="dk" style="left:639px;top:751px;width:130px;height:22px;text-align:right;padding-right:2px;line-height:22px"><span class="n"><i>2</i><i>,</i><i>1</i><i>6</i><i>0</i><i>,</i><i>0</i><i>0</i><i>0</i></span></div>
</body></html>
